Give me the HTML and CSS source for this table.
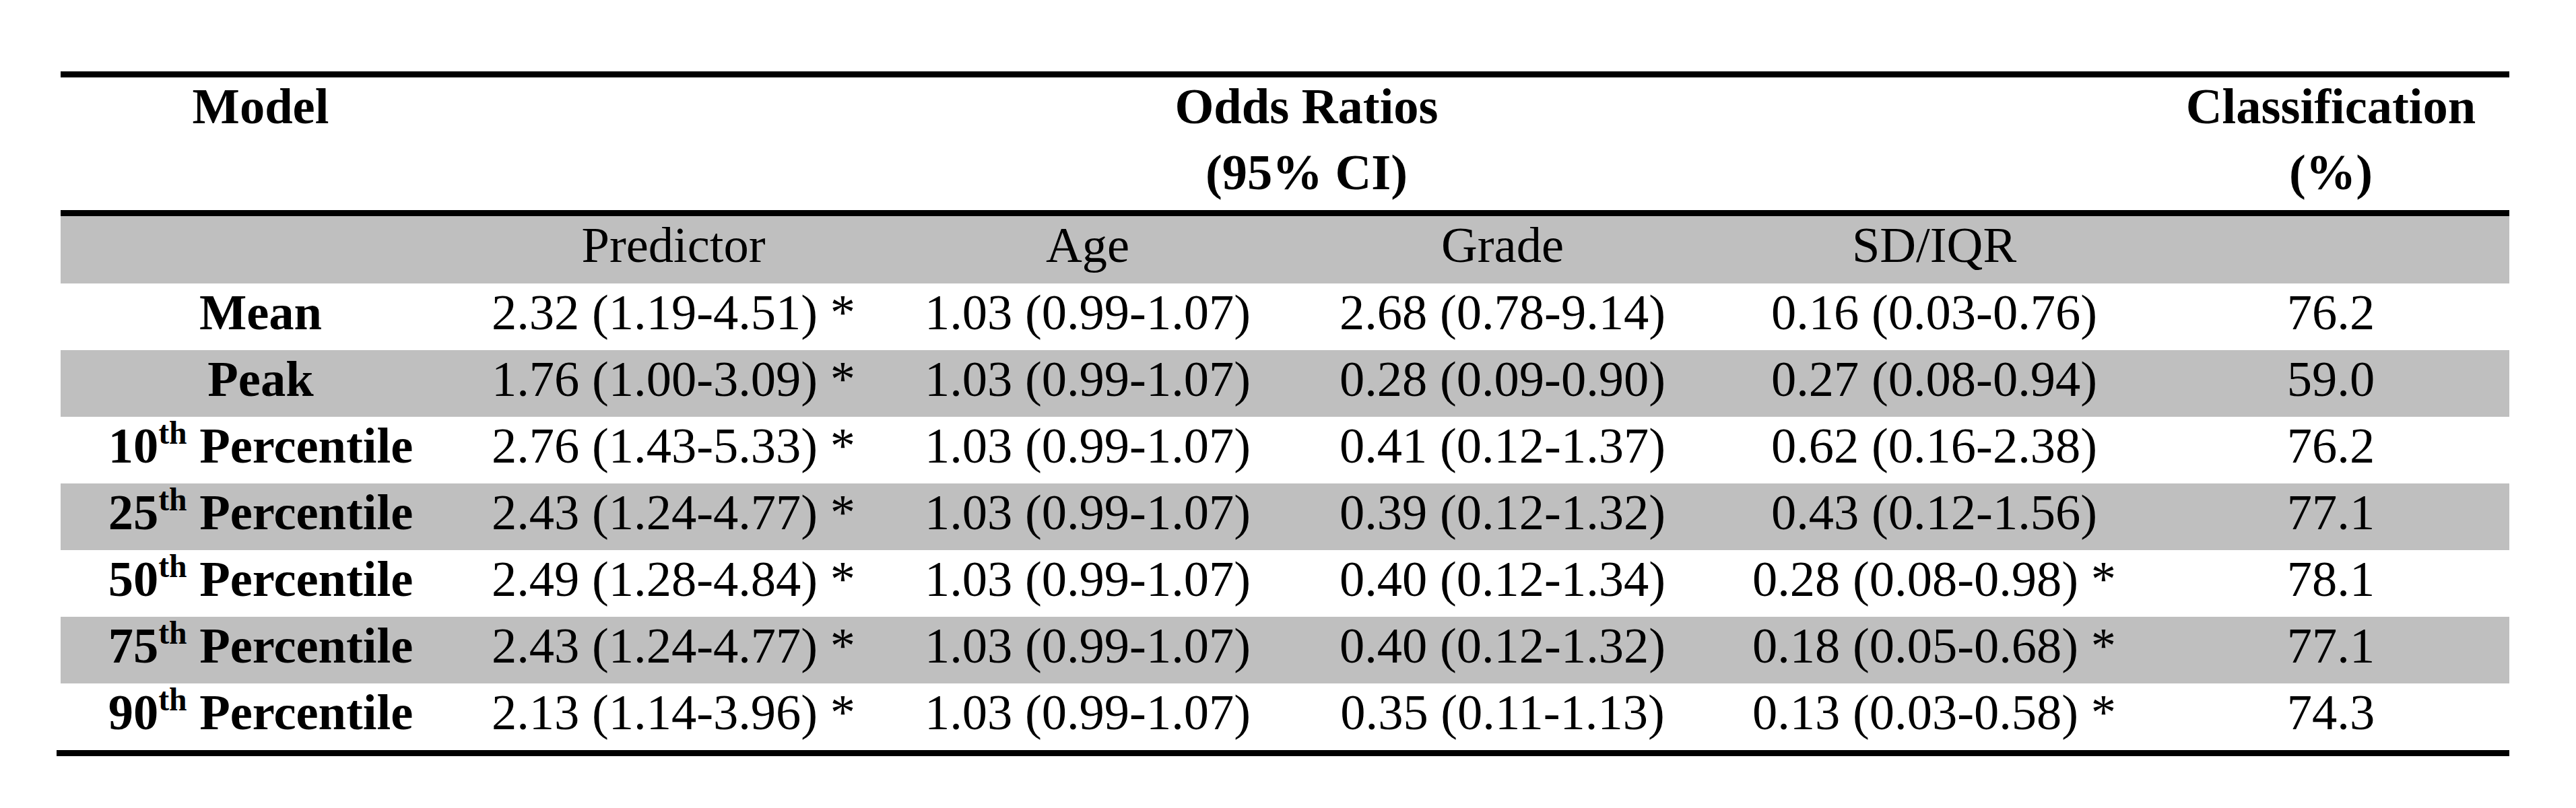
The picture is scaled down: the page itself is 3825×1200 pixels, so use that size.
FILE: index.html
```html
<!DOCTYPE html>
<html>
<head>
<meta charset="utf-8">
<link rel="stylesheet" href="styles.css">
</head>
<body>
<div class="page">
  <div class="table">
    <div class="rule"></div>
    <div class="row head">
      <div class="cell bold"><div class="line">Model</div></div>
      <div class="cell bold span4"><div class="line">Odds Ratios</div><div class="line">(95% CI)</div></div>
      <div class="cell bold"><div class="line">Classification</div><div class="line">(%)</div></div>
    </div>
    <div class="rule"></div>
    <div class="row sub shade">
      <div class="cell"></div>
      <div class="cell">Predictor</div>
      <div class="cell">Age</div>
      <div class="cell">Grade</div>
      <div class="cell">SD/IQR</div>
      <div class="cell"></div>
    </div>
    <div class="row data">
      <div class="cell bold">Mean</div>
      <div class="cell">2.32 (1.19-4.51) *</div>
      <div class="cell">1.03 (0.99-1.07)</div>
      <div class="cell">2.68 (0.78-9.14)</div>
      <div class="cell">0.16 (0.03-0.76)</div>
      <div class="cell">76.2</div>
    </div>
    <div class="row data shade">
      <div class="cell bold">Peak</div>
      <div class="cell">1.76 (1.00-3.09) *</div>
      <div class="cell">1.03 (0.99-1.07)</div>
      <div class="cell">0.28 (0.09-0.90)</div>
      <div class="cell">0.27 (0.08-0.94)</div>
      <div class="cell">59.0</div>
    </div>
    <div class="row data">
      <div class="cell bold">10<sup>th</sup> Percentile</div>
      <div class="cell">2.76 (1.43-5.33) *</div>
      <div class="cell">1.03 (0.99-1.07)</div>
      <div class="cell">0.41 (0.12-1.37)</div>
      <div class="cell">0.62 (0.16-2.38)</div>
      <div class="cell">76.2</div>
    </div>
    <div class="row data shade">
      <div class="cell bold">25<sup>th</sup> Percentile</div>
      <div class="cell">2.43 (1.24-4.77) *</div>
      <div class="cell">1.03 (0.99-1.07)</div>
      <div class="cell">0.39 (0.12-1.32)</div>
      <div class="cell">0.43 (0.12-1.56)</div>
      <div class="cell">77.1</div>
    </div>
    <div class="row data">
      <div class="cell bold">50<sup>th</sup> Percentile</div>
      <div class="cell">2.49 (1.28-4.84) *</div>
      <div class="cell">1.03 (0.99-1.07)</div>
      <div class="cell">0.40 (0.12-1.34)</div>
      <div class="cell">0.28 (0.08-0.98) *</div>
      <div class="cell">78.1</div>
    </div>
    <div class="row data shade">
      <div class="cell bold">75<sup>th</sup> Percentile</div>
      <div class="cell">2.43 (1.24-4.77) *</div>
      <div class="cell">1.03 (0.99-1.07)</div>
      <div class="cell">0.40 (0.12-1.32)</div>
      <div class="cell">0.18 (0.05-0.68) *</div>
      <div class="cell">77.1</div>
    </div>
    <div class="row data">
      <div class="cell bold">90<sup>th</sup> Percentile</div>
      <div class="cell">2.13 (1.14-3.96) *</div>
      <div class="cell">1.03 (0.99-1.07)</div>
      <div class="cell">0.35 (0.11-1.13)</div>
      <div class="cell">0.13 (0.03-0.58) *</div>
      <div class="cell">74.3</div>
    </div>
    <div class="rule bottom"></div>
  </div>
</div>
</body>
</html>
```

FILE: styles.css
```css
html, body {
  margin: 0;
  padding: 0;
  background: #ffffff;
}

.page {
  padding: 106px 0 0 90px;
  font-family: "Liberation Serif", "Times New Roman", serif;
  font-size: 74.5px;
  color: #000000;
}

.table {
  width: 3636px;
  display: flex;
  flex-direction: column;
}

.rule {
  height: 9px;
  background: #000000;
}

.rule.bottom {
  margin-left: -6px;
  width: 3642px;
}

.row {
  display: grid;
  grid-template-columns: 594px 632px 598px 634px 648px 530px;
}

.shade {
  background: #bfbfbf;
}

.cell {
  text-align: center;
  line-height: 86px;
  white-space: nowrap;
}

.bold {
  font-weight: bold;
}

.span4 {
  grid-column: span 4;
}

.head .cell {
  display: flex;
  flex-direction: column;
  gap: 12px;
  padding-bottom: 13px;
}

.sub .cell {
  height: 86px;
  padding-bottom: 14px;
}

.data .cell {
  height: 86px;
  padding-bottom: 13px;
}

sup {
  font-size: 0.64em;
  line-height: 0;
  vertical-align: 0.58em;
}
```
